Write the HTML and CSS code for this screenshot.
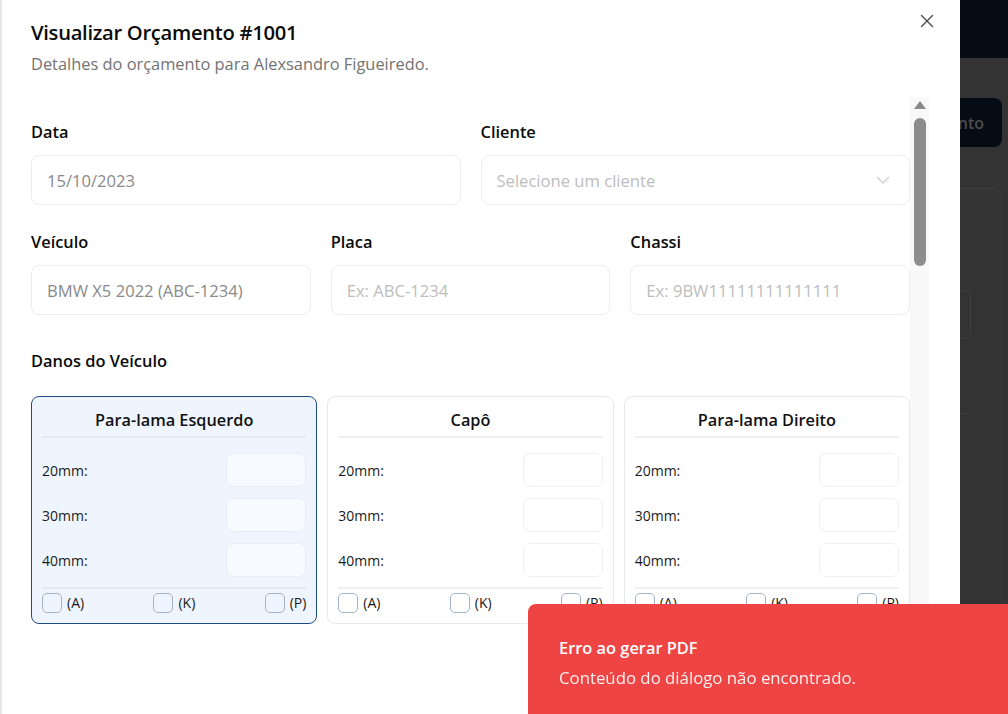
FILE: index.html
```html
<!DOCTYPE html>
<html lang="pt-BR">
<head>
<meta charset="utf-8">
<title>Visualizar Orçamento</title>
<link rel="stylesheet" href="styles.css">
</head>
<body>
<div class="page">
  <header class="page-header"></header>
  <main class="page-main">
    <div class="toolbar">
      <button class="primary-btn">Novo Orçamento</button>
    </div>
    <section class="page-card">
      <div class="page-card-input"></div>
      <div class="page-card-line"></div>
    </section>
  </main>
</div>

<div class="dialog" role="dialog">
  <button class="close-btn" aria-label="Fechar">
    <svg width="14" height="14" viewBox="0 0 14 14"><path d="M1.5 1.5 L12.5 12.5 M12.5 1.5 L1.5 12.5" stroke="#4b4b4b" stroke-width="1.4" fill="none" stroke-linecap="round"/></svg>
  </button>
  <div class="dialog-head">
    <h2 class="dialog-title">Visualizar Orçamento #1001</h2>
    <p class="dialog-sub">Detalhes do orçamento para Alexsandro Figueiredo.</p>
  </div>
  <div class="dialog-body">
    <div class="scroll-content">
      <div class="grid2">
        <div class="field">
          <label class="lbl">Data</label>
          <input class="inp" readonly value="15/10/2023">
        </div>
        <div class="field">
          <label class="lbl">Cliente</label>
          <div class="inp select">
            <span class="ph">Selecione um cliente</span>
            <svg width="14" height="8" viewBox="0 0 14 8"><path d="M1 1 L7 7 L13 1" stroke="#cfcfcf" stroke-width="1.3" fill="none"/></svg>
          </div>
        </div>
      </div>
      <div class="grid3">
        <div class="field">
          <label class="lbl">Veículo</label>
          <input class="inp" readonly value="BMW X5 2022 (ABC-1234)">
        </div>
        <div class="field">
          <label class="lbl">Placa</label>
          <input class="inp" readonly placeholder="Ex: ABC-1234">
        </div>
        <div class="field">
          <label class="lbl">Chassi</label>
          <input class="inp" readonly placeholder="Ex: 9BW11111111111111">
        </div>
      </div>
      <div class="lbl section-lbl">Danos do Veículo</div>
      <div class="cards">
        <div class="card active">
          <div class="card-title">Para-lama Esquerdo</div>
          <div class="rows">
            <div class="row"><span>20mm:</span><input class="small-inp" readonly></div>
            <div class="row"><span>30mm:</span><input class="small-inp" readonly></div>
            <div class="row"><span>40mm:</span><input class="small-inp" readonly></div>
          </div>
          <div class="checks">
            <label class="chk"><span class="box"></span>(A)</label>
            <label class="chk"><span class="box"></span>(K)</label>
            <label class="chk"><span class="box"></span>(P)</label>
          </div>
        </div>
        <div class="card">
          <div class="card-title">Capô</div>
          <div class="rows">
            <div class="row"><span>20mm:</span><input class="small-inp" readonly></div>
            <div class="row"><span>30mm:</span><input class="small-inp" readonly></div>
            <div class="row"><span>40mm:</span><input class="small-inp" readonly></div>
          </div>
          <div class="checks">
            <label class="chk"><span class="box"></span>(A)</label>
            <label class="chk"><span class="box"></span>(K)</label>
            <label class="chk"><span class="box"></span>(P)</label>
          </div>
        </div>
        <div class="card">
          <div class="card-title">Para-lama Direito</div>
          <div class="rows">
            <div class="row"><span>20mm:</span><input class="small-inp" readonly></div>
            <div class="row"><span>30mm:</span><input class="small-inp" readonly></div>
            <div class="row"><span>40mm:</span><input class="small-inp" readonly></div>
          </div>
          <div class="checks">
            <label class="chk"><span class="box"></span>(A)</label>
            <label class="chk"><span class="box"></span>(K)</label>
            <label class="chk"><span class="box"></span>(P)</label>
          </div>
        </div>
      </div>
    </div>
    <div class="scrollbar">
      <span class="sb-arrow"></span>
      <span class="sb-thumb"></span>
    </div>
  </div>
</div>

<div class="toast" role="alert">
  <div class="toast-title">Erro ao gerar PDF</div>
  <div class="toast-desc">Conteúdo do diálogo não encontrado.</div>
</div>
</body>
</html>
```
FILE: styles.css
```css
* { box-sizing: border-box; }
html, body { margin: 0; padding: 0; }
body {
  width: 1008px;
  height: 714px;
  overflow: hidden;
  font-family: "Open Sans", "Noto Sans", sans-serif;
  color: #111;
  background: #333333;
}

/* background page (dimmed) */
.page { display: flex; flex-direction: column; height: 714px; overflow: hidden; }
.page-header { height: 58px; background: #060c15; flex: none; }
.page-main { flex: 1; background: #333333; padding: 40px 6px 0 0; min-height: 0; overflow: hidden; }
.toolbar { display: flex; justify-content: flex-end; }
.primary-btn {
  height: 49px; width: 190px; border: none; border-radius: 8px;
  background: #060c15; color: #4d4d4d; font: 600 16px "Open Sans", sans-serif;
  padding: 0 18px; text-align: right;
}
.page-card {
  margin: 41px 0 0 auto; width: 600px; height: 500px;
  border: 1px solid #3d3d3d; border-radius: 8px;
  padding: 101px 30px 0 0;
  display: flex; flex-direction: column; align-items: flex-end;
}
.page-card-input { width: 300px; height: 49px; border: 1px solid #404040; border-radius: 7px; }
.page-card-line { width: 560px; height: 1px; background: #3d3d3d; margin-top: 74px; }

/* dialog */
.dialog {
  position: fixed; left: 0; top: 0; width: 960px; height: 714px;
  background: #fff; border-left: 2px solid #e6e6e6;
  display: flex; flex-direction: column;
}
.close-btn {
  position: absolute; top: 13px; right: 25px;
  width: 16px; height: 16px; padding: 0; border: none; background: none;
  display: flex; align-items: center; justify-content: center;
}
.dialog-head { padding: 17px 30px 0 29px; height: 97px; flex: none; }
.dialog-title { margin: 0; font-size: 20.2px; font-weight: 600; line-height: 30px; color: #0b0b0b; letter-spacing: -0.3px; }
.dialog-sub { margin: 5px 0 0; font-size: 16.4px; line-height: 24px; color: #737373; }

.dialog-body { flex: 1; display: flex; padding: 0 31px 0 29px; min-height: 0; }
.scroll-content { flex: 1; overflow: hidden; padding-top: 23px; }
.scrollbar {
  width: 19px; flex: none; background: #f8f8f8;
  display: flex; flex-direction: column; align-items: center;
  padding-top: 4px;
}
.sb-arrow {
  width: 0; height: 0;
  border-left: 6px solid transparent; border-right: 6px solid transparent;
  border-bottom: 8px solid #8a8a8a;
}
.sb-thumb { width: 12px; height: 148px; border-radius: 6px; background: #8c8c8c; margin-top: 9px; }

.grid2 { display: grid; grid-template-columns: 1fr 1fr; gap: 20px; }
.grid3 { display: grid; grid-template-columns: 1fr 1fr 1fr; gap: 20px; margin-top: 25px; }
.field { display: flex; flex-direction: column; gap: 11px; }
.lbl { font-size: 16.4px; font-weight: 600; line-height: 24px; color: #0b0b0b; }
.inp {
  height: 50px; border: 1px solid #ededed; border-radius: 8px;
  padding: 0 15px; font: 16.6px "Open Sans", sans-serif; color: #8a8a8a;
  background: #fff; outline: none; width: 100%;
}
.inp::placeholder { color: #bdbdbd; }
.select { display: flex; align-items: center; justify-content: space-between; padding-right: 19px; }
.ph { color: #bdbdbd; }

.section-lbl { margin-top: 34px; }
.cards { display: grid; grid-template-columns: 1fr 1fr 1fr; gap: 10px; margin-top: 23px; }
.card {
  border: 1px solid #e7e8ea; border-radius: 8px; background: #fff;
  padding: 11px 10px 10px; height: 228px;
}
.card.active { background: #eff5fe; border-color: #1f4c87; }
.card-title {
  text-align: center; font-size: 16.3px; font-weight: 600; line-height: 24px; color: #111;
  padding-bottom: 4px; border-bottom: 2px solid #eef0f3;
}
.card.active .card-title { border-bottom-color: #e4eaf3; }
.rows { display: flex; flex-direction: column; gap: 11px; padding: 15px 0 10px; border-bottom: 2px solid #eef0f3; }
.card.active .rows { border-bottom-color: #e4eaf3; }
.row { display: flex; align-items: center; justify-content: space-between; font-size: 14px; color: #1a1a1a; }
.small-inp {
  width: 80px; height: 34px; border: 1px solid #eef0f3; border-radius: 7px; background: #fff; outline: none;
}
.card.active .small-inp { background: #f7faff; border-color: #e6edf7; }
.checks { display: flex; justify-content: space-between; padding-top: 4px; }
.chk { display: flex; align-items: center; gap: 5px; font-size: 14px; color: #1a1a1a; line-height: 20px; }
.box { width: 20px; height: 20px; border: 1px solid #a3b3c8; border-radius: 5px; background: #fff; }
.card.active .box { background: transparent; }

/* toast */
.toast {
  position: fixed; left: 528px; top: 604px; width: 480px; height: 110px;
  background: #ef4444; border-radius: 8px 0 0 0; color: #fff;
  padding: 34px 31px;
}
.toast-title { font-size: 16.4px; font-weight: 600; line-height: 20px; }
.toast-desc { font-size: 16.8px; line-height: 22px; margin-top: 9px; opacity: 0.92; }
```
